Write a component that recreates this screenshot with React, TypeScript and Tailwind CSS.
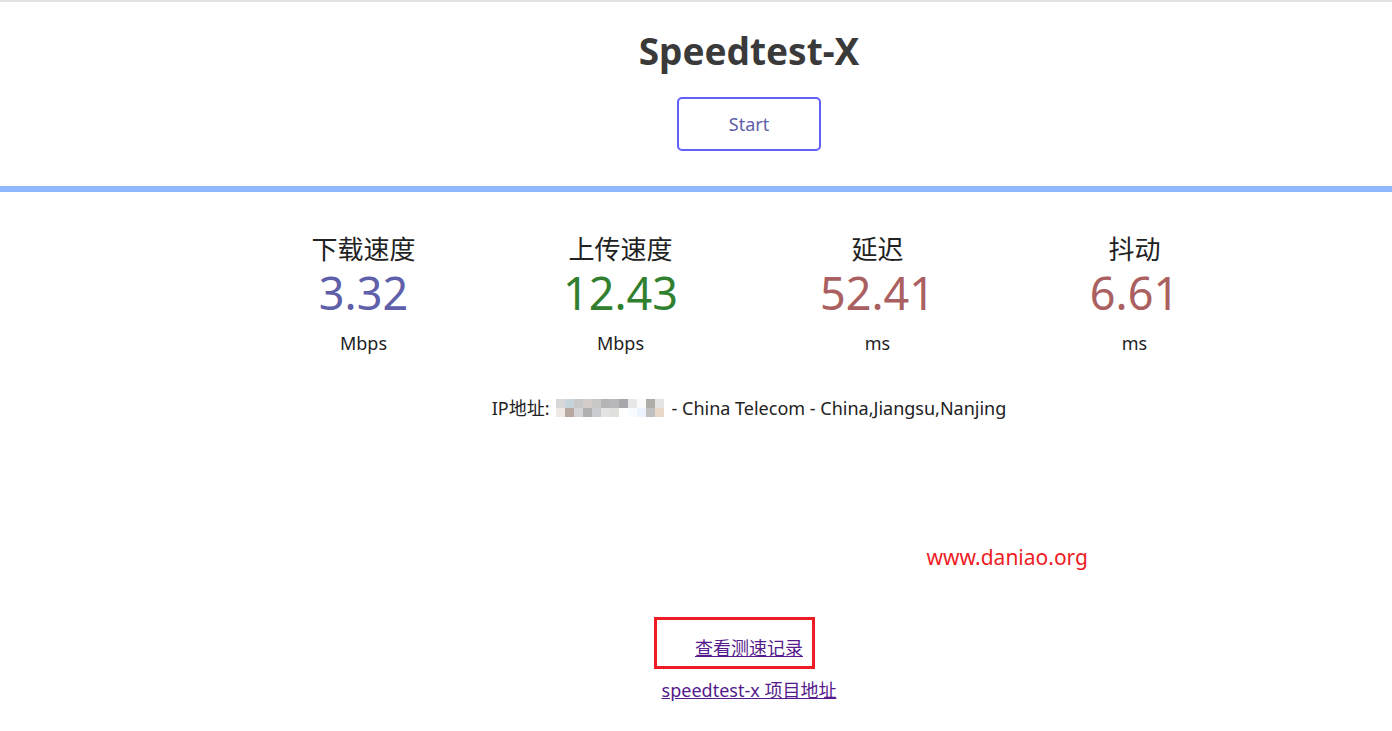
import React from "react";

const font = { fontFamily: '"Noto Sans", "Noto Sans CJK SC", sans-serif' };

const row1 = ["#d8d8d8", "#c8d4dc", "#c8c8c8", "#d4ccc8", "#c8c8c4", "#b4b4b4", "#b8b8bc", "#a8a8ac", "#e8e8e8", "#fafafa", "#b0aca8", "#e4e4e4"];
const row2 = ["#f0e8e4", "#b8a8a0", "#d4d4d8", "#b0b0b0", "#c8ccd0", "#e4e4e4", "#e0e0dc", "#ffffff", "#f8fcff", "#eef4ff", "#c0c0c0", "#e8d8c8"];

function Metric({ title, value, unit, color }: { title: string; value: string; unit: string; color: string }) {
  return (
    <div className="w-[257px] flex flex-col items-center">
      <div className="text-[26px] leading-[26px] text-[#222]">{title}</div>
      <div className={`text-[45px] leading-[50px] mt-[6px] ${color}`}>{value}</div>
      <div className="text-[18px] leading-[24px] mt-[13px] text-[#222]">{unit}</div>
    </div>
  );
}

export default function App() {
  return (
    <div className="w-[1392px] h-[731px] bg-white overflow-hidden relative" style={font}>
      <div className="h-[2px] bg-[#e2e2e2]" />
      <div className="pl-[106px]">
        <div className="flex flex-col items-center">
          <h1 className="text-[37px] leading-[50px] font-bold text-[#3a3a3a] mt-[24px]">Speedtest-X</h1>
          <button className="mt-[21px] w-[144px] h-[54px] border-[2.5px] border-[#6060ff] rounded-[5px] text-[18px] text-[#6060aa] bg-transparent">
            Start
          </button>
        </div>
      </div>
      <div className="h-[6px] bg-[#8fb8ff] mt-[35px]" />
      <div className="pl-[106px]">
        <div className="flex justify-center mt-[44px]">
          <Metric title="下载速度" value="3.32" unit="Mbps" color="text-[#6060aa]" />
          <Metric title="上传速度" value="12.43" unit="Mbps" color="text-[#308030]" />
          <Metric title="延迟" value="52.41" unit="ms" color="text-[#aa6060]" />
          <Metric title="抖动" value="6.61" unit="ms" color="text-[#aa6060]" />
        </div>
        <div className="flex justify-center items-center mt-[40px] text-[18px] leading-[26px] text-[#222]">
          <span>IP地址:</span>
          <span className="inline-flex flex-col ml-[6px] mr-[8px]">
            <span className="flex">
              {row1.map((c, i) => (
                <span key={i} className="w-[9px] h-[9px]" style={{ backgroundColor: c }} />
              ))}
            </span>
            <span className="flex">
              {row2.map((c, i) => (
                <span key={i} className="w-[9px] h-[9px]" style={{ backgroundColor: c }} />
              ))}
            </span>
          </span>
          <span>- China Telecom - China,Jiangsu,Nanjing</span>
        </div>
        <div className="flex justify-end pr-[304px] mt-[122px]">
          <span className="text-[21px] leading-[28px] text-[#ee1c25]">www.daniao.org</span>
        </div>
        <div className="flex flex-col items-center mt-[46px]">
          <div className="border-[3px] border-[#ee1c25] w-[161px] h-[52px] flex items-center justify-end pr-[9px] pt-[9px] -ml-[29px]">
            <a href="#" className="text-[18px] leading-[24px] text-[#551a8b] underline">查看测速记录</a>
          </div>
          <a href="#" className="mt-[9px] text-[18px] leading-[24px] text-[#551a8b] underline">speedtest-x 项目地址</a>
        </div>
      </div>
    </div>
  );
}
